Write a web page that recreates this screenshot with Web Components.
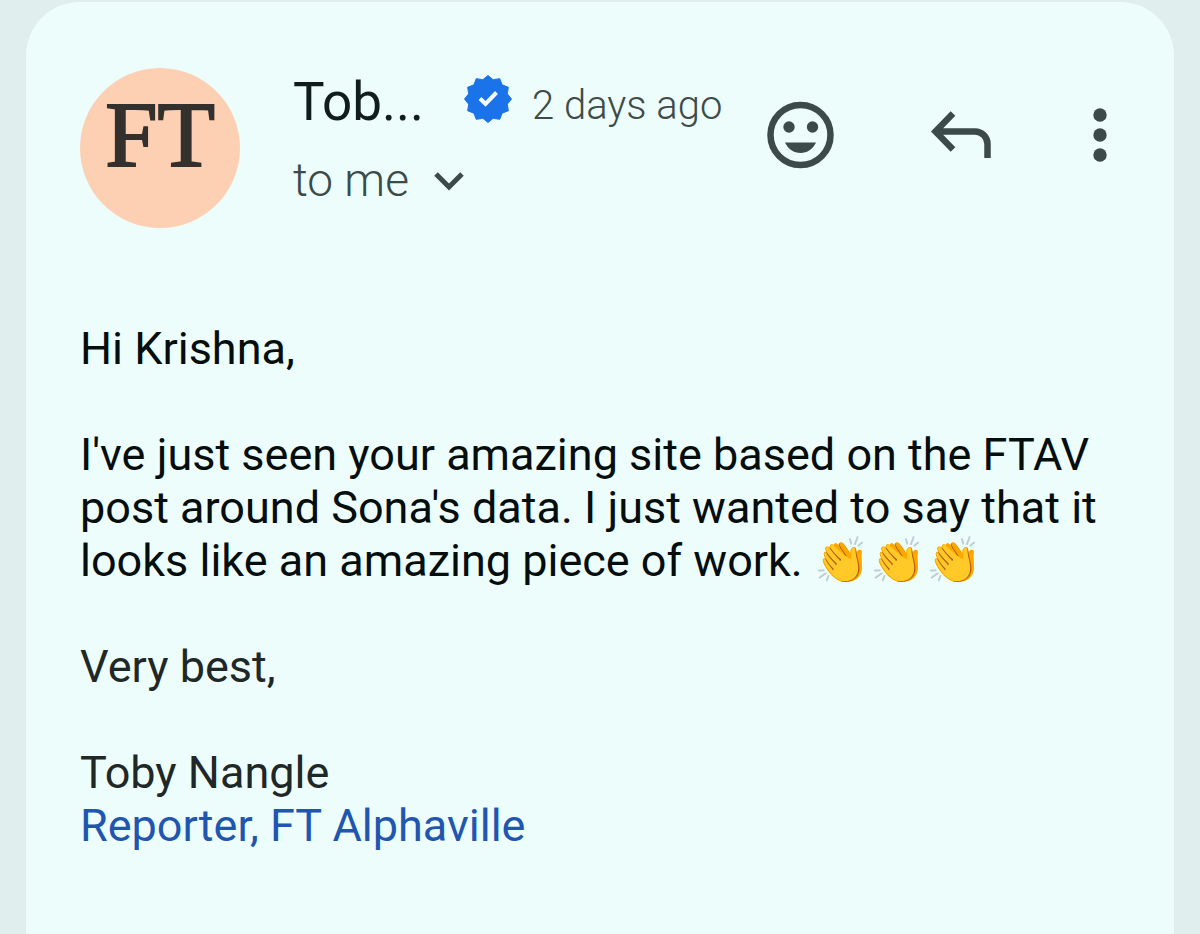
<!DOCTYPE html>
<html lang="en">
<head>
<meta charset="utf-8">
<meta name="viewport" content="width=device-width, initial-scale=1">
<title>Mail</title>
<style>
body {
  margin: 0;
  background: #e0efee;
  font-family: Roboto, "Liberation Sans", sans-serif;
}
mail-card {
  min-height: 100vh;
}
a {
  color: #2156b0;
  text-decoration: none;
}
</style>
</head>
<body>
<mail-card>
  <mail-header slot="header" name="Tob..." when="2 days ago" to="to me" initials="FT"></mail-header>
  <mail-body>
    <p>Hi Krishna,</p>
    <p>I've just seen your amazing site based on the FTAV post around Sona's data. I just wanted to say that it looks like an amazing piece of work. 👏👏👏</p>
    <p class="soft">Very best,</p>
    <p class="soft">Toby Nangle<br><a href="#alphaville">Reporter, FT Alphaville</a></p>
  </mail-body>
</mail-card>

<script>
const cardTemplate = document.createElement('template');
cardTemplate.innerHTML = `
<style>
:host {
  display: flex;
  box-sizing: border-box;
  padding: 2px 26px 0;
}
article {
  flex: 1;
  min-width: 0;
  padding: 66px 54px 54px;
  border-radius: 54px 54px 0 0;
  background: #ecfdfc;
}
</style>
<article>
  <slot name="header"></slot>
  <slot></slot>
</article>`;

class MailCard extends HTMLElement {
  constructor() {
    super();
    this.attachShadow({ mode: 'open' }).appendChild(cardTemplate.content.cloneNode(true));
  }
}

const avatarTemplate = document.createElement('template');
avatarTemplate.innerHTML = `
<style>
:host {
  display: block;
  flex: none;
  box-sizing: border-box;
  width: 160px;
  height: 160px;
  padding-top: 19px;
  border-radius: 50%;
  background: #fdcfb3;
  color: #33302e;
  font-family: "Liberation Serif", serif;
  font-size: 94px;
  line-height: 94px;
  text-align: center;
  -webkit-text-stroke: 2px #33302e;
}
</style>
<slot></slot>`;

class MailAvatar extends HTMLElement {
  constructor() {
    super();
    this.attachShadow({ mode: 'open' }).appendChild(avatarTemplate.content.cloneNode(true));
  }
}

const badgeTemplate = document.createElement('template');
badgeTemplate.innerHTML = `
<style>
:host {
  display: block;
  flex: none;
}
svg {
  display: block;
  width: 48px;
  height: 48px;
}
</style>
<svg viewBox="0 0 48 48" role="img" aria-label="Verified sender">
  <polygon fill="#1a73e8" stroke="#1a73e8" stroke-width="1" stroke-linejoin="round"/>
  <path d="M16 23.5l5.5 5.5 11-11.500" fill="none" stroke="#f4fdff" stroke-width="4"/>
</svg>`;

class VerifiedBadge extends HTMLElement {
  constructor() {
    super();
    this.root = this.attachShadow({ mode: 'open' });
    this.root.appendChild(badgeTemplate.content.cloneNode(true));
    this.root.querySelector('polygon').setAttribute('points', this._starPoints(12, 23.5, 20));
  }

  // Outer and inner points alternate around the centre
  _starPoints(count, outer, inner) {
    const points = [];
    for (let i = 0; i < count * 2; i++) {
      const r = i % 2 ? inner : outer;
      const angle = Math.PI * i / count;
      points.push(`${(24 + r * Math.cos(angle)).toFixed(2)},${(24 + r * Math.sin(angle)).toFixed(2)}`);
    }
    return points.join(' ');
  }
}

const headerTemplate = document.createElement('template');
headerTemplate.innerHTML = `
<style>
:host {
  display: block;
}
header {
  display: flex;
  align-items: flex-start;
}
.meta {
  flex: 1;
  min-width: 0;
  margin-left: 53px;
}
.line {
  display: flex;
  align-items: flex-start;
  white-space: nowrap;
}
.name {
  margin: 0 40px 0 0;
  color: #101d1c;
  font-size: 53px;
  font-weight: 400;
  line-height: 68px;
}
verified-badge {
  padding-top: 7px;
}
.when {
  margin-left: 20px;
  padding-top: 10px;
  color: #3f4a49;
  font-size: 40px;
  font-weight: 350;
  line-height: 56px;
}
button {
  display: flex;
  padding: 0;
  border: 0;
  background: none;
  color: #3c4a49;
  cursor: pointer;
}
.to {
  align-items: center;
  gap: 22px;
  margin-top: 12px;
  font-family: inherit;
  font-size: 46px;
  font-weight: 350;
  line-height: 64px;
}
.to svg {
  width: 36px;
  height: 36px;
}
.actions {
  display: flex;
  flex: none;
  gap: 80px;
  padding-top: 27px;
}
.actions svg {
  display: block;
  height: 80px;
}
</style>
<header>
  <mail-avatar></mail-avatar>
  <div class="meta">
    <div class="line">
      <h1 class="name"></h1>
      <verified-badge></verified-badge>
      <time class="when"></time>
    </div>
    <button class="to" type="button" aria-expanded="false">
      <span></span>
      <svg viewBox="0 0 36 36" aria-hidden="true"><path d="M5 12l13 13 13-13" fill="none" stroke="currentColor" stroke-width="5"/></svg>
    </button>
  </div>
  <div class="actions">
    <button type="button" aria-label="Add reaction">
      <svg viewBox="0 0 80 80" width="80">
        <circle cx="40.500" cy="40" r="30" fill="none" stroke="currentColor" stroke-width="6.500"/>
        <circle cx="29" cy="32" r="5.700" fill="currentColor"/>
        <circle cx="52.500" cy="32" r="5.700" fill="currentColor"/>
        <path d="M25 47.500h31C53 54 47 58 40.500 58S28 54 25 47.500z" fill="currentColor"/>
      </svg>
    </button>
    <button type="button" aria-label="Reply">
      <svg viewBox="0 0 80 80" width="80">
        <path d="M33 18.500L15.500 36.500l17.500 18M15.500 36.500H55A12.500 12.500 0 0 1 67.500 49V63" fill="none" stroke="currentColor" stroke-width="6.500"/>
      </svg>
    </button>
    <button type="button" aria-label="More options">
      <svg viewBox="0 0 40 80" width="40">
        <circle cx="20" cy="20" r="6.700" fill="currentColor"/>
        <circle cx="20" cy="40" r="6.700" fill="currentColor"/>
        <circle cx="20" cy="60" r="6.700" fill="currentColor"/>
      </svg>
    </button>
  </div>
</header>`;

class MailHeader extends HTMLElement {
  constructor() {
    super();
    this.root = this.attachShadow({ mode: 'open' });
    this.root.appendChild(headerTemplate.content.cloneNode(true));
  }

  connectedCallback() {
    this.root.querySelector('mail-avatar').textContent = this.getAttribute('initials');
    this.root.querySelector('.name').textContent = this.getAttribute('name');
    this.root.querySelector('.when').textContent = this.getAttribute('when');
    this.root.querySelector('.to span').textContent = this.getAttribute('to');
  }
}

const bodyTemplate = document.createElement('template');
bodyTemplate.innerHTML = `
<style>
:host {
  display: block;
  margin-top: 94px;
  color: #060d0d;
  font-size: 45px;
  line-height: 53px;
}
::slotted(p) {
  margin: 0 0 53px;
}
::slotted(.soft) {
  color: #1f2827;
}
</style>
<slot></slot>`;

class MailBody extends HTMLElement {
  constructor() {
    super();
    this.attachShadow({ mode: 'open' }).appendChild(bodyTemplate.content.cloneNode(true));
  }
}

customElements.define('mail-avatar', MailAvatar);
customElements.define('verified-badge', VerifiedBadge);
customElements.define('mail-header', MailHeader);
customElements.define('mail-body', MailBody);
customElements.define('mail-card', MailCard);
</script>
</body>
</html>
